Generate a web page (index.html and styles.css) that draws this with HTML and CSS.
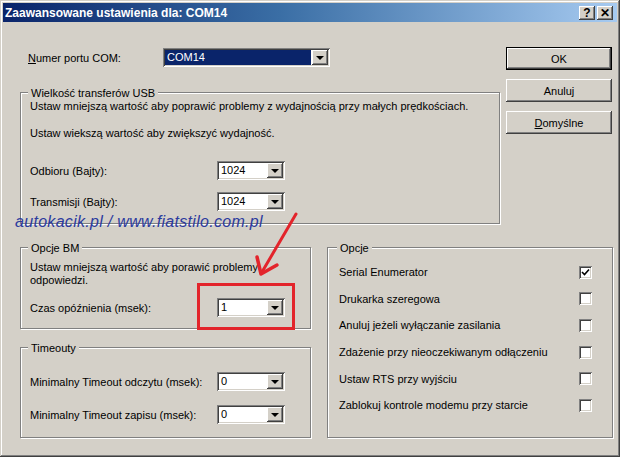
FILE: index.html
```html
<!DOCTYPE html>
<html lang="pl">

<head>
	<title>Zaawansowane ustawienia dla: COM14</title>
	<link rel="stylesheet" href="styles.css">
</head>

<body>

	<div class="window">
		<div class="titlebar">
			<span class="title">Zaawansowane ustawienia dla: COM14</span>
			<div class="caption-btns">
				<span class="cap-btn">?</span>
				<span class="cap-btn">&#x2715;</span>
			</div>
		</div>

		<div class="content">
			<div class="top">
				<div class="top-main">
					<div class="port-row">
						<span class="port-label"><u>N</u>umer portu COM:</span>
						<div class="combo combo-port">
							<span class="combo-value selected">COM14</span>
							<span class="combo-btn"></span>
						</div>
					</div>

					<div class="group usb">
						<span class="group-title">Wielkość transferów USB</span>
						<p class="note note-1">Ustaw mniejszą wartość aby poprawić problemy z wydajnością przy małych prędkościach.</p>
						<p class="note note-2">Ustaw wiekszą wartość aby zwiększyć wydajność.</p>
						<div class="field field-rx">
							<span class="field-label">Odbioru (Bajty):</span>
							<div class="combo"><span class="combo-value">1024</span><span class="combo-btn"></span></div>
						</div>
						<div class="field field-tx">
							<span class="field-label">Transmisji (Bajty):</span>
							<div class="combo"><span class="combo-value">1024</span><span class="combo-btn"></span></div>
						</div>
					</div>
				</div>

				<div class="buttons">
					<button class="btn btn-default">OK</button>
					<button class="btn">Anuluj</button>
					<button class="btn"><u>D</u>omyślne</button>
				</div>
			</div>

			<div class="bottom">
				<div class="col-left">
					<div class="group bm">
						<span class="group-title">Opcje BM</span>
						<p class="note note-bm">Ustaw mniejszą wartość aby porawić problemy<br>odpowiedzi.</p>
						<div class="field field-delay">
							<span class="field-label">Czas opóźnienia (msek):</span>
							<div class="combo"><span class="combo-value">1</span><span class="combo-btn"></span></div>
						</div>
					</div>

					<div class="group timeouts">
						<span class="group-title">Timeouty</span>
						<div class="field field-read">
							<span class="field-label">Minimalny Timeout odczytu (msek):</span>
							<div class="combo"><span class="combo-value">0</span><span class="combo-btn"></span></div>
						</div>
						<div class="field field-write">
							<span class="field-label">Minimalny Timeout zapisu (msek):</span>
							<div class="combo"><span class="combo-value">0</span><span class="combo-btn"></span></div>
						</div>
					</div>
				</div>

				<div class="group options">
					<span class="group-title">Opcje</span>
					<div class="opt-list">
						<div class="opt"><span>Serial Enumerator</span><span class="check checked"><svg width="9" height="9" viewBox="0 0 9 9"><path d="M1 4 L3.5 6.5 L8 1.5" fill="none" stroke="#000" stroke-width="1.6"/></svg></span></div>
						<div class="opt"><span>Drukarka szeregowa</span><span class="check"></span></div>
						<div class="opt"><span>Anuluj jeżeli wyłączanie zasilania</span><span class="check"></span></div>
						<div class="opt"><span>Zdażenie przy nieoczekiwanym odłączeniu</span><span class="check"></span></div>
						<div class="opt"><span>Ustaw RTS przy wyjściu</span><span class="check"></span></div>
						<div class="opt"><span>Zablokuj kontrole modemu przy starcie</span><span class="check"></span></div>
					</div>
				</div>
			</div>
		</div>

		<!-- annotations drawn over the dialog -->
		<div class="watermark">autokacik.pl / www.fiatstilo.com.pl</div>
		<div class="highlight"></div>
		<svg class="arrow" width="620" height="457" viewBox="0 0 620 457">
			<path d="M296 214 L262 272" stroke="#e3242b" stroke-width="3" stroke-linecap="round" fill="none"/>
			<path d="M257 257 L261 274 L277 265" stroke="#e3242b" stroke-width="3.5" stroke-linecap="round" stroke-linejoin="round" fill="none"/>
		</svg>
	</div>

</body>

</html>
```

FILE: styles.css
```css
:root {
	--face: #d4d0c8;
	--shadow: #808080;
	--dark: #404040;
	--light: #ffffff;
	--red: #e3242b;
}
body { margin: 0; background: var(--face); font: 11px "Liberation Sans", Arial, sans-serif; color: #000; }
p { margin: 0; }

.window {
	position: relative;
	width: 620px;
	height: 457px;
	box-sizing: border-box;
	padding: 3px;
	background: var(--face);
	box-shadow: inset -1px -1px var(--dark), inset 1px 1px var(--face), inset -2px -2px var(--shadow), inset 2px 2px var(--light);
}

/* title bar */
.titlebar {
	height: 19px;
	display: flex;
	align-items: center;
	justify-content: space-between;
	padding: 0 4px 0 2px;
	background: linear-gradient(to right, #0a246a, #3a6ea5 45%, #a6caf0);
}
.title { color: #fff; font-weight: bold; font-size: 12px; }
.caption-btns { display: flex; gap: 2px; }
.cap-btn {
	width: 16px;
	height: 14px;
	background: var(--face);
	box-shadow: inset -1px -1px var(--dark), inset 1px 1px var(--light), inset -2px -2px var(--shadow);
	font-weight: bold;
	font-size: 12px;
	line-height: 14px;
	text-align: center;
}

/* layout */
.content { padding: 25px 0 0 17px; }
.top { display: flex; align-items: flex-start; }
.top-main { width: 480px; }
.port-row { display: flex; align-items: center; height: 19px; margin-top: 1px; padding-left: 8px; }
.port-label { width: 135px; }

.buttons { margin-left: 6px; width: 106px; display: flex; flex-direction: column; gap: 9px; }
.btn {
	height: 23px;
	border: none;
	background: var(--face);
	font: inherit;
	color: #000;
	box-shadow: inset -1px -1px var(--dark), inset 1px 1px var(--light), inset -2px -2px var(--shadow);
}
.btn-default { box-shadow: inset -1px -1px #000, inset 1px 1px #000, inset -2px -2px var(--dark), inset 2px 2px var(--light), inset -3px -3px var(--shadow); }

.bottom { display: flex; align-items: flex-start; gap: 16px; margin-top: 23px; }
.col-left { width: 291px; }

/* group boxes */
.group {
	box-sizing: border-box;
	border: 1px solid var(--shadow);
	box-shadow: 1px 1px 0 var(--light), inset 1px 1px 0 var(--light);
	padding: 0 9px;
}
.group-title {
	display: block;
	width: max-content;
	margin: -6px 0 0 -2px;
	padding: 0 3px;
	line-height: 12px;
	background: var(--face);
}
.usb { height: 132px; margin-top: 25px; }
.bm { height: 82px; }
.timeouts { height: 91px; margin-top: 18px; }
.options { width: 286px; height: 191px; padding: 0 20px 0 11px; }

.note { line-height: 13px; }
.note-1 { margin-top: 1px; }
.note-2 { margin-top: 14px; }
.note-bm { margin-top: 7px; }

.field { display: flex; align-items: center; height: 19px; }
.field-label { width: 187px; }
.field-rx { margin-top: 21px; }
.field-tx { margin-top: 12px; }
.field-delay { margin-top: 11px; }
.field-read { margin-top: 18px; }
.field-write { margin-top: 14px; }

/* combo boxes */
.combo {
	display: flex;
	width: 68px;
	height: 19px;
	box-sizing: border-box;
	padding: 2px;
	background: #fff;
	box-shadow: inset 1px 1px var(--shadow), inset -1px -1px var(--light), inset 2px 2px var(--dark), inset -2px -2px var(--face);
}
.combo-port { width: 167px; }
.combo-value { flex: 1; padding-left: 2px; line-height: 15px; }
.combo-value.selected { background: #0a246a; color: #fff; margin-right: 1px; }
.combo-btn {
	position: relative;
	width: 16px;
	height: 15px;
	background: var(--face);
	box-shadow: inset -1px -1px var(--dark), inset 1px 1px var(--light), inset -2px -2px var(--shadow);
}
.combo-btn::after {
	content: "";
	position: absolute;
	left: 4px;
	top: 6px;
	border-left: 4px solid transparent;
	border-right: 4px solid transparent;
	border-top: 4px solid #000;
}

/* check boxes */
.opt-list { margin-top: 5px; }
.opt { display: flex; justify-content: space-between; align-items: center; height: 26.6px; }
.check {
	display: flex;
	align-items: center;
	justify-content: center;
	width: 13px;
	height: 13px;
	box-sizing: border-box;
	background: #fff;
	box-shadow: inset 1px 1px var(--shadow), inset -1px -1px var(--light), inset 2px 2px var(--dark), inset -2px -2px var(--face);
}

/* annotations */
.watermark {
	position: absolute;
	left: 15px;
	top: 213px;
	font: italic 16px/18px "Liberation Sans", Arial, sans-serif;
	letter-spacing: 0.3px;
	color: #2b3a9e;
	white-space: nowrap;
}
.highlight {
	position: absolute;
	left: 197px;
	top: 283px;
	width: 98px;
	height: 47px;
	box-sizing: border-box;
	border: 3px solid var(--red);
}
.arrow { position: absolute; left: 0; top: 0; }
```
